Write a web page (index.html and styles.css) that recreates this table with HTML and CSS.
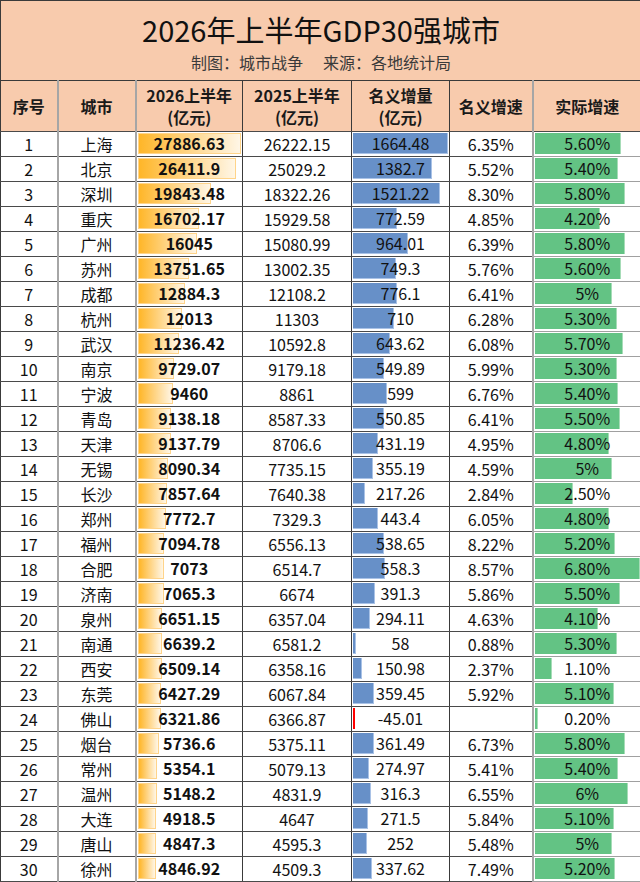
FILE: index.html
```html
<!DOCTYPE html>
<html lang="zh-CN">
<head>
<meta charset="utf-8">
<title>2026年上半年GDP30强城市</title>
<link rel="stylesheet" href="styles.css">
</head>
<body>
<table class="sheet">
<colgroup>
<col class="c-rank"><col class="c-city"><col class="c-y26"><col class="c-y25"><col class="c-inc"><col class="c-nom"><col class="c-real">
</colgroup>
<thead>
<tr class="title-row"><th colspan="7">
<div class="title">2026年上半年GDP30强城市</div>
<div class="sub"><span>制图：城市战争</span><span>来源：各地统计局</span></div>
</th></tr>
<tr class="head-row">
<th class="rank">序号</th>
<th class="city">城市</th>
<th class="y26">2026上半年<br>(亿元)</th>
<th class="y25">2025上半年<br>(亿元)</th>
<th class="inc">名义增量<br>(亿元)</th>
<th class="nom">名义增速</th>
<th class="real">实际增速</th>
</tr>
</thead>
<tbody>
<tr><td class="rank">1</td><td class="city">上海</td><td class="y26"><div class="cell"><i class="bar orange" style="width:100%"></i><b class="val">27886.63</b></div></td><td class="y25">26222.15</td><td class="inc"><div class="cell"><i class="bar blue" style="width:100%"></i><span class="val">1664.48</span></div></td><td class="nom">6.35%</td><td class="real"><div class="cell"><i class="bar green" style="width:82.4%"></i><span class="val">5.60%</span></div></td></tr>
<tr><td class="rank">2</td><td class="city">北京</td><td class="y26"><div class="cell"><i class="bar orange" style="width:94.7%"></i><b class="val">26411.9</b></div></td><td class="y25">25029.2</td><td class="inc"><div class="cell"><i class="bar blue" style="width:83.1%"></i><span class="val">1382.7</span></div></td><td class="nom">5.52%</td><td class="real"><div class="cell"><i class="bar green" style="width:79.4%"></i><span class="val">5.40%</span></div></td></tr>
<tr><td class="rank">3</td><td class="city">深圳</td><td class="y26"><div class="cell"><i class="bar orange" style="width:71.2%"></i><b class="val">19843.48</b></div></td><td class="y25">18322.26</td><td class="inc"><div class="cell"><i class="bar blue" style="width:91.4%"></i><span class="val">1521.22</span></div></td><td class="nom">8.30%</td><td class="real"><div class="cell"><i class="bar green" style="width:85.3%"></i><span class="val">5.80%</span></div></td></tr>
<tr><td class="rank">4</td><td class="city">重庆</td><td class="y26"><div class="cell"><i class="bar orange" style="width:59.9%"></i><b class="val">16702.17</b></div></td><td class="y25">15929.58</td><td class="inc"><div class="cell"><i class="bar blue" style="width:46.4%"></i><span class="val">772.59</span></div></td><td class="nom">4.85%</td><td class="real"><div class="cell"><i class="bar green" style="width:61.8%"></i><span class="val">4.20%</span></div></td></tr>
<tr><td class="rank">5</td><td class="city">广州</td><td class="y26"><div class="cell"><i class="bar orange" style="width:57.5%"></i><b class="val">16045</b></div></td><td class="y25">15080.99</td><td class="inc"><div class="cell"><i class="bar blue" style="width:57.9%"></i><span class="val">964.01</span></div></td><td class="nom">6.39%</td><td class="real"><div class="cell"><i class="bar green" style="width:85.3%"></i><span class="val">5.80%</span></div></td></tr>
<tr><td class="rank">6</td><td class="city">苏州</td><td class="y26"><div class="cell"><i class="bar orange" style="width:49.3%"></i><b class="val">13751.65</b></div></td><td class="y25">13002.35</td><td class="inc"><div class="cell"><i class="bar blue" style="width:45%"></i><span class="val">749.3</span></div></td><td class="nom">5.76%</td><td class="real"><div class="cell"><i class="bar green" style="width:82.4%"></i><span class="val">5.60%</span></div></td></tr>
<tr><td class="rank">7</td><td class="city">成都</td><td class="y26"><div class="cell"><i class="bar orange" style="width:46.2%"></i><b class="val">12884.3</b></div></td><td class="y25">12108.2</td><td class="inc"><div class="cell"><i class="bar blue" style="width:46.6%"></i><span class="val">776.1</span></div></td><td class="nom">6.41%</td><td class="real"><div class="cell"><i class="bar green" style="width:73.5%"></i><span class="val">5%</span></div></td></tr>
<tr><td class="rank">8</td><td class="city">杭州</td><td class="y26"><div class="cell"><i class="bar orange" style="width:43.1%"></i><b class="val">12013</b></div></td><td class="y25">11303</td><td class="inc"><div class="cell"><i class="bar blue" style="width:42.7%"></i><span class="val">710</span></div></td><td class="nom">6.28%</td><td class="real"><div class="cell"><i class="bar green" style="width:77.9%"></i><span class="val">5.30%</span></div></td></tr>
<tr><td class="rank">9</td><td class="city">武汉</td><td class="y26"><div class="cell"><i class="bar orange" style="width:40.3%"></i><b class="val">11236.42</b></div></td><td class="y25">10592.8</td><td class="inc"><div class="cell"><i class="bar blue" style="width:38.7%"></i><span class="val">643.62</span></div></td><td class="nom">6.08%</td><td class="real"><div class="cell"><i class="bar green" style="width:83.8%"></i><span class="val">5.70%</span></div></td></tr>
<tr><td class="rank">10</td><td class="city">南京</td><td class="y26"><div class="cell"><i class="bar orange" style="width:34.9%"></i><b class="val">9729.07</b></div></td><td class="y25">9179.18</td><td class="inc"><div class="cell"><i class="bar blue" style="width:33%"></i><span class="val">549.89</span></div></td><td class="nom">5.99%</td><td class="real"><div class="cell"><i class="bar green" style="width:77.9%"></i><span class="val">5.30%</span></div></td></tr>
<tr><td class="rank">11</td><td class="city">宁波</td><td class="y26"><div class="cell"><i class="bar orange" style="width:33.9%"></i><b class="val">9460</b></div></td><td class="y25">8861</td><td class="inc"><div class="cell"><i class="bar blue" style="width:36%"></i><span class="val">599</span></div></td><td class="nom">6.76%</td><td class="real"><div class="cell"><i class="bar green" style="width:79.4%"></i><span class="val">5.40%</span></div></td></tr>
<tr><td class="rank">12</td><td class="city">青岛</td><td class="y26"><div class="cell"><i class="bar orange" style="width:32.8%"></i><b class="val">9138.18</b></div></td><td class="y25">8587.33</td><td class="inc"><div class="cell"><i class="bar blue" style="width:33.1%"></i><span class="val">550.85</span></div></td><td class="nom">6.41%</td><td class="real"><div class="cell"><i class="bar green" style="width:80.9%"></i><span class="val">5.50%</span></div></td></tr>
<tr><td class="rank">13</td><td class="city">天津</td><td class="y26"><div class="cell"><i class="bar orange" style="width:32.8%"></i><b class="val">9137.79</b></div></td><td class="y25">8706.6</td><td class="inc"><div class="cell"><i class="bar blue" style="width:25.9%"></i><span class="val">431.19</span></div></td><td class="nom">4.95%</td><td class="real"><div class="cell"><i class="bar green" style="width:70.6%"></i><span class="val">4.80%</span></div></td></tr>
<tr><td class="rank">14</td><td class="city">无锡</td><td class="y26"><div class="cell"><i class="bar orange" style="width:29%"></i><b class="val">8090.34</b></div></td><td class="y25">7735.15</td><td class="inc"><div class="cell"><i class="bar blue" style="width:21.3%"></i><span class="val">355.19</span></div></td><td class="nom">4.59%</td><td class="real"><div class="cell"><i class="bar green" style="width:73.5%"></i><span class="val">5%</span></div></td></tr>
<tr><td class="rank">15</td><td class="city">长沙</td><td class="y26"><div class="cell"><i class="bar orange" style="width:28.2%"></i><b class="val">7857.64</b></div></td><td class="y25">7640.38</td><td class="inc"><div class="cell"><i class="bar blue" style="width:13.1%"></i><span class="val">217.26</span></div></td><td class="nom">2.84%</td><td class="real"><div class="cell"><i class="bar green" style="width:36.8%"></i><span class="val">2.50%</span></div></td></tr>
<tr><td class="rank">16</td><td class="city">郑州</td><td class="y26"><div class="cell"><i class="bar orange" style="width:27.9%"></i><b class="val">7772.7</b></div></td><td class="y25">7329.3</td><td class="inc"><div class="cell"><i class="bar blue" style="width:26.6%"></i><span class="val">443.4</span></div></td><td class="nom">6.05%</td><td class="real"><div class="cell"><i class="bar green" style="width:70.6%"></i><span class="val">4.80%</span></div></td></tr>
<tr><td class="rank">17</td><td class="city">福州</td><td class="y26"><div class="cell"><i class="bar orange" style="width:25.4%"></i><b class="val">7094.78</b></div></td><td class="y25">6556.13</td><td class="inc"><div class="cell"><i class="bar blue" style="width:32.4%"></i><span class="val">538.65</span></div></td><td class="nom">8.22%</td><td class="real"><div class="cell"><i class="bar green" style="width:76.5%"></i><span class="val">5.20%</span></div></td></tr>
<tr><td class="rank">18</td><td class="city">合肥</td><td class="y26"><div class="cell"><i class="bar orange" style="width:25.4%"></i><b class="val">7073</b></div></td><td class="y25">6514.7</td><td class="inc"><div class="cell"><i class="bar blue" style="width:33.5%"></i><span class="val">558.3</span></div></td><td class="nom">8.57%</td><td class="real"><div class="cell"><i class="bar green" style="width:100%"></i><span class="val">6.80%</span></div></td></tr>
<tr><td class="rank">19</td><td class="city">济南</td><td class="y26"><div class="cell"><i class="bar orange" style="width:25.3%"></i><b class="val">7065.3</b></div></td><td class="y25">6674</td><td class="inc"><div class="cell"><i class="bar blue" style="width:23.5%"></i><span class="val">391.3</span></div></td><td class="nom">5.86%</td><td class="real"><div class="cell"><i class="bar green" style="width:80.9%"></i><span class="val">5.50%</span></div></td></tr>
<tr><td class="rank">20</td><td class="city">泉州</td><td class="y26"><div class="cell"><i class="bar orange" style="width:23.9%"></i><b class="val">6651.15</b></div></td><td class="y25">6357.04</td><td class="inc"><div class="cell"><i class="bar blue" style="width:17.7%"></i><span class="val">294.11</span></div></td><td class="nom">4.63%</td><td class="real"><div class="cell"><i class="bar green" style="width:60.3%"></i><span class="val">4.10%</span></div></td></tr>
<tr><td class="rank">21</td><td class="city">南通</td><td class="y26"><div class="cell"><i class="bar orange" style="width:23.8%"></i><b class="val">6639.2</b></div></td><td class="y25">6581.2</td><td class="inc"><div class="cell"><i class="bar blue" style="width:3.5%"></i><span class="val">58</span></div></td><td class="nom">0.88%</td><td class="real"><div class="cell"><i class="bar green" style="width:77.9%"></i><span class="val">5.30%</span></div></td></tr>
<tr><td class="rank">22</td><td class="city">西安</td><td class="y26"><div class="cell"><i class="bar orange" style="width:23.3%"></i><b class="val">6509.14</b></div></td><td class="y25">6358.16</td><td class="inc"><div class="cell"><i class="bar blue" style="width:9.1%"></i><span class="val">150.98</span></div></td><td class="nom">2.37%</td><td class="real"><div class="cell"><i class="bar green" style="width:16.2%"></i><span class="val">1.10%</span></div></td></tr>
<tr><td class="rank">23</td><td class="city">东莞</td><td class="y26"><div class="cell"><i class="bar orange" style="width:23%"></i><b class="val">6427.29</b></div></td><td class="y25">6067.84</td><td class="inc"><div class="cell"><i class="bar blue" style="width:21.6%"></i><span class="val">359.45</span></div></td><td class="nom">5.92%</td><td class="real"><div class="cell"><i class="bar green" style="width:75%"></i><span class="val">5.10%</span></div></td></tr>
<tr><td class="rank">24</td><td class="city">佛山</td><td class="y26"><div class="cell"><i class="bar orange" style="width:22.7%"></i><b class="val">6321.86</b></div></td><td class="y25">6366.87</td><td class="inc"><div class="cell"><i class="bar red"></i><span class="val">-45.01</span></div></td><td class="nom"></td><td class="real"><div class="cell"><i class="bar green" style="width:2.9%"></i><span class="val">0.20%</span></div></td></tr>
<tr><td class="rank">25</td><td class="city">烟台</td><td class="y26"><div class="cell"><i class="bar orange" style="width:20.6%"></i><b class="val">5736.6</b></div></td><td class="y25">5375.11</td><td class="inc"><div class="cell"><i class="bar blue" style="width:21.7%"></i><span class="val">361.49</span></div></td><td class="nom">6.73%</td><td class="real"><div class="cell"><i class="bar green" style="width:85.3%"></i><span class="val">5.80%</span></div></td></tr>
<tr><td class="rank">26</td><td class="city">常州</td><td class="y26"><div class="cell"><i class="bar orange" style="width:19.2%"></i><b class="val">5354.1</b></div></td><td class="y25">5079.13</td><td class="inc"><div class="cell"><i class="bar blue" style="width:16.5%"></i><span class="val">274.97</span></div></td><td class="nom">5.41%</td><td class="real"><div class="cell"><i class="bar green" style="width:79.4%"></i><span class="val">5.40%</span></div></td></tr>
<tr><td class="rank">27</td><td class="city">温州</td><td class="y26"><div class="cell"><i class="bar orange" style="width:18.5%"></i><b class="val">5148.2</b></div></td><td class="y25">4831.9</td><td class="inc"><div class="cell"><i class="bar blue" style="width:19%"></i><span class="val">316.3</span></div></td><td class="nom">6.55%</td><td class="real"><div class="cell"><i class="bar green" style="width:88.2%"></i><span class="val">6%</span></div></td></tr>
<tr><td class="rank">28</td><td class="city">大连</td><td class="y26"><div class="cell"><i class="bar orange" style="width:17.6%"></i><b class="val">4918.5</b></div></td><td class="y25">4647</td><td class="inc"><div class="cell"><i class="bar blue" style="width:16.3%"></i><span class="val">271.5</span></div></td><td class="nom">5.84%</td><td class="real"><div class="cell"><i class="bar green" style="width:75%"></i><span class="val">5.10%</span></div></td></tr>
<tr><td class="rank">29</td><td class="city">唐山</td><td class="y26"><div class="cell"><i class="bar orange" style="width:17.4%"></i><b class="val">4847.3</b></div></td><td class="y25">4595.3</td><td class="inc"><div class="cell"><i class="bar blue" style="width:15.1%"></i><span class="val">252</span></div></td><td class="nom">5.48%</td><td class="real"><div class="cell"><i class="bar green" style="width:73.5%"></i><span class="val">5%</span></div></td></tr>
<tr><td class="rank">30</td><td class="city">徐州</td><td class="y26"><div class="cell"><i class="bar orange" style="width:17.4%"></i><b class="val">4846.92</b></div></td><td class="y25">4509.3</td><td class="inc"><div class="cell"><i class="bar blue" style="width:20.3%"></i><span class="val">337.62</span></div></td><td class="nom">7.49%</td><td class="real"><div class="cell"><i class="bar green" style="width:76.5%"></i><span class="val">5.20%</span></div></td></tr>
</tbody>
</table>
</body>
</html>
```
FILE: styles.css
```css
html, body {
  margin: 0;
  padding: 0;
  background: #ffffff;
}
body {
  font-family: "Noto Sans CJK SC", "Noto Sans", sans-serif;
  color: #111;
  overflow: hidden;
}
.sheet {
  width: 641px;
  border-collapse: collapse;
  table-layout: fixed;
  font-size: 16px;
}
.c-rank { width: 57px; }
.c-city { width: 78px; }
.c-y26 { width: 107px; }
.c-y25 { width: 109px; }
.c-inc { width: 98px; }
.c-nom { width: 83px; }
.c-real { width: 109px; }

.sheet th, .sheet td {
  padding: 0;
  text-align: center;
  vertical-align: middle;
  border-top: 1px solid #4a4a4a;
  border-bottom: 1px solid #4a4a4a;
  border-left: 1px solid #3a3a3a;
  border-right: 1px solid #3a3a3a;
}

.title-row th {
  background: #f8cbad;
  height: 79px;
  font-weight: normal;
  border: 1px solid #3a3a3a;
}
.title {
  font-size: 29px;
  line-height: 38px;
  color: #111;
  margin-top: 3px;
}
.sub {
  font-size: 16px;
  line-height: 24px;
  color: #3a3a3a;
  display: flex;
  justify-content: center;
  gap: 20px;
  margin-top: 2px;
}

.head-row th {
  background: #f8cbad;
  height: 50px;
  font-size: 16px;
  line-height: 22px;
  font-weight: bold;
  color: #1a1a1a;
}

.sheet td {
  height: 24px;
  line-height: 24px;
  color: #111;
}

.sheet .city { border-left: 2px solid #a6a6a6; }
.sheet .y26 { border-left: 2px solid #a6a6a6; }
.sheet .inc { border-left: 1px dashed #333; }
.sheet .real { border-left: 2px solid #a6a6a6; }
.sheet td.real { border-top-color: #a0a0a0; border-bottom-color: #a0a0a0; }

.cell {
  display: grid;
  grid-template-columns: 1fr;
  grid-template-rows: 1fr;
  height: 24px;
  box-sizing: border-box;
  padding: 1px 1px 2px 1px;
}
.bar {
  grid-area: 1 / 1;
  justify-self: start;
  align-self: stretch;
  box-sizing: border-box;
  display: block;
}
.val {
  grid-area: 1 / 1;
  place-self: center;
  line-height: 21px;
  font-style: normal;
  position: relative;
}
b.val { font-weight: bold; }

.orange {
  background: linear-gradient(to right, #ffb628 0%, #ffd27e 45%, #fff6e6 100%);
  border: 1px solid #ffd48a;
}
.blue {
  background: #6790c8;
  border-right: 1px solid #a9c2e6;
  border-bottom: 1px solid #a9c2e6;
}
.green {
  background: #63c384;
  border-right: 1px solid #a6dcb7;
}
.red {
  width: 2px;
  background: #ff0000;
}
```
